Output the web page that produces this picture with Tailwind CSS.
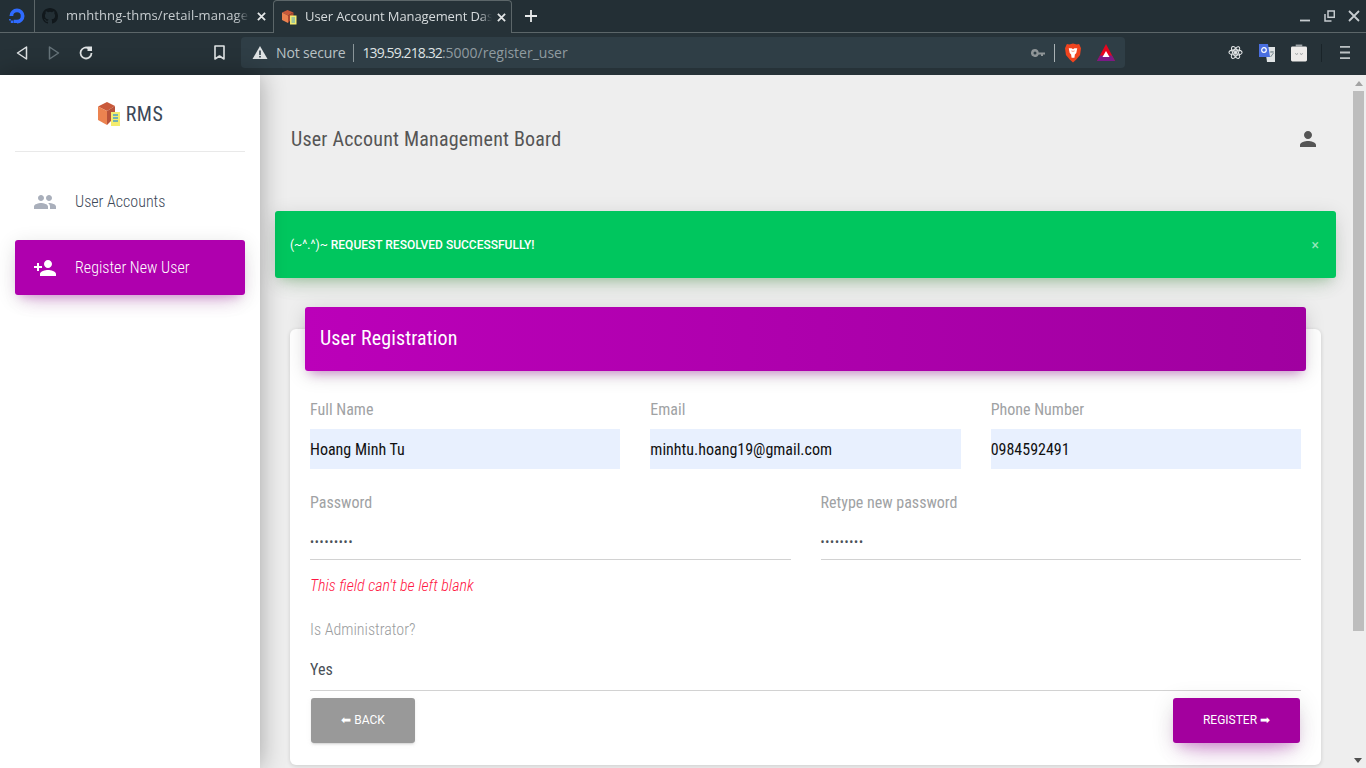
<!DOCTYPE html>
<html lang="en">
<head>
  <meta charset="UTF-8" />
  <title>User Account Management Dashboard</title>
  <script src="https://cdn.jsdelivr.net/npm/@tailwindcss/browser@4"></script>
</head>
<body class="h-[768px] w-[1366px] overflow-hidden bg-[#eeeeee] font-['Roboto',sans-serif]">

  <!-- Browser chrome -->
  <header class="h-[75px] bg-[#263238] font-['Open_Sans',sans-serif]">
    <!-- Tab strip -->
    <div class="flex h-[33px] items-end border-b border-[#5c6669] bg-[#232f35]">
      <div class="flex h-[32px] w-[35px] items-center justify-center border-r border-[#5c6669]">
        <svg class="h-[20px] w-[20px]" viewBox="0 0 24 24" fill="none">
          <path d="M12 21a9 9 0 1 0-9-9h4.500a4.500 4.500 0 1 1 4.500 4.500z" fill="#2f6bff"/>
          <path d="M12 16.500h-4v4h4zM7.500 20.500h-3v-3h3zM4.500 17.500h-2v-2h2z" fill="#2f6bff"/>
        </svg>
      </div>
      <div class="flex h-[32px] w-[238px] items-center pl-[7px]">
        <svg class="h-[16px] w-[16px] shrink-0" viewBox="0 0 16 16" fill="#11181c">
          <path d="M8 0C3.580 0 0 3.580 0 8c0 3.540 2.290 6.530 5.470 7.590.4.070.55-.17.55-.38 0-.19-.01-.82-.01-1.490-2.010.37-2.530-.49-2.690-.94-.09-.23-.48-.94-.82-1.130-.28-.15-.68-.52-.01-.53.630-.01 1.080.58 1.230.82.720 1.210 1.870.87 2.330.66.070-.52.280-.87.510-1.070-1.780-.2-3.640-.89-3.640-3.950 0-.87.310-1.590.820-2.150-.08-.2-.36-1.020.08-2.120 0 0 .670-.21 2.200.82a7.420 7.420 0 0 1 4 0c1.530-1.040 2.200-.82 2.200-.82.440 1.100.160 1.920.080 2.120.510.560.820 1.270.820 2.150 0 3.070-1.870 3.750-3.650 3.950.29.250.54.730.54 1.480 0 1.070-.01 1.930-.01 2.200 0 .210.150.460.550.380A8.010 8.010 0 0 0 16 8c0-4.420-3.580-8-8-8z"/>
        </svg>
        <span class="ml-[8px] w-[183px] shrink-0 whitespace-nowrap text-[13px] tracking-[0.1px] text-[#c6cccf] [mask-image:linear-gradient(to_right,black_170px,transparent_183px)]">mnhthng-thms/retail-manage</span>
        <svg class="ml-[8px] h-[9px] w-[9px] shrink-0" viewBox="0 0 10 10" stroke="#e3e6e7" stroke-width="2"><path d="M1 1l8 8M9 1l-8 8"/></svg>
      </div>
      <div class="relative -mb-px flex h-[33px] w-[239px] items-center rounded-t-[4px] border border-b-0 border-[#5c6669] bg-[#263238] pl-[7px]">
        <svg class="h-[16px] w-[16px] shrink-0" viewBox="0 0 16 16">
          <path d="M6.500 1L12.500 3.500L7 6.500L1 3.500z" fill="#c9593a"/>
          <path d="M1 3.500L7 6.500V14L1 11z" fill="#ec8350"/>
          <path d="M7 6.500L12.500 3.500V8L7 14z" fill="#b04a30"/>
          <rect x="9" y="6.500" width="6.500" height="9" fill="#f4ec6e"/>
          <path d="M10.500 9h3.500M10.500 11h3.500M10.500 13h3.500" stroke="#4ba0c8" stroke-width="1"/>
        </svg>
        <span class="ml-[8px] w-[187px] shrink-0 whitespace-nowrap text-[13px] tracking-[-0.1px] text-[#d5dadc] [mask-image:linear-gradient(to_right,black_175px,transparent_187px)]">User Account Management Das</span>
        <svg class="ml-[5px] h-[9px] w-[9px] shrink-0" viewBox="0 0 10 10" stroke="#e3e6e7" stroke-width="2"><path d="M1 1l8 8M9 1l-8 8"/></svg>
      </div>
      <div class="flex h-[32px] w-[38px] items-center justify-center">
        <svg class="h-[12px] w-[12px]" viewBox="0 0 12 12" stroke="#e8eaeb" stroke-width="1.800"><path d="M6 0v12M0 6h12"/></svg>
      </div>
      <div class="flex h-[32px] flex-1 items-center justify-end gap-[13px] pr-[6px]">
        <svg class="h-[12px] w-[11px]" viewBox="0 0 11 12" stroke="#c6cccf" stroke-width="1.800"><path d="M0 10.500h10"/></svg>
        <svg class="h-[12px] w-[11px]" viewBox="0 0 11 12" fill="none" stroke="#c6cccf" stroke-width="1.500"><rect x="4" y="1" width="6.300" height="6.300"/><path d="M1 4v7h6.500"/></svg>
        <svg class="h-[12px] w-[12px]" viewBox="0 0 12 12" stroke="#c6cccf" stroke-width="1.800"><path d="M1 1l10 10M11 1L1 11"/></svg>
      </div>
    </div>
    <!-- Toolbar -->
    <div class="flex h-[42px] items-center pb-[3px]">
      <div class="flex w-[241px] items-center pl-[16px]">
        <svg class="h-[16px] w-[12px]" viewBox="0 0 12 16" fill="none" stroke="#dfe3e4" stroke-width="1.500" stroke-linejoin="round"><path d="M10.500 2v12L1.500 8z"/></svg>
        <svg class="ml-[20px] h-[16px] w-[12px]" viewBox="0 0 12 16" fill="none" stroke="#66747a" stroke-width="1.500" stroke-linejoin="round"><path d="M1.500 2v12l9-6z"/></svg>
        <svg class="ml-[18px] h-[16px] w-[16px]" viewBox="0 0 16 16" fill="none" stroke="#dfe3e4" stroke-width="1.800"><path d="M13.500 8A5.500 5.500 0 1 1 11 3.400"/><path d="M9.500 1.500h4.500v4.500h-4.500z" fill="#dfe3e4" stroke="none"/></svg>
        <svg class="ml-[120px] h-[15px] w-[11px]" viewBox="0 0 11 15" fill="none" stroke="#dfe3e4" stroke-width="1.600" stroke-linejoin="round"><path d="M1 1h9v13l-4.500-3L1 14z"/></svg>
      </div>
      <div class="flex h-[31px] w-[884px] items-center rounded-[4px] bg-[#2f3e46] pl-[11px]">
        <svg class="h-[15px] w-[16px]" viewBox="0 0 16 15"><path d="M8 1l7.500 13H.500z" fill="#dfe3e4"/><path d="M7.200 5.500h1.600v4.500h-1.600zM7.200 11h1.600v1.500h-1.600z" fill="#2f3e46"/></svg>
        <span class="ml-[8px] text-[14px] tracking-[-0.15px] text-[#b9c1c4]">Not secure</span>
        <span class="ml-[7px] h-[18px] w-px bg-[#8a9599]"></span>
        <span class="ml-[9px] text-[14px] text-[#8f9ba0]"><span class="tracking-[-0.9px] text-[#dfe3e4]">139.59.218.32</span>:5000/register_user</span>
        <span class="flex-1"></span>
        <svg class="h-[8px] w-[14px]" viewBox="0 0 14 8" fill="#8f9597"><path d="M4 0a4 4 0 1 0 3.700 5.500H10V7h2V5.500h2v-2H7.700A4 4 0 0 0 4 0zm0 2.500a1.500 1.500 0 1 1 0 3 1.500 1.500 0 0 1 0-3z" fill-rule="evenodd"/></svg>
        <span class="ml-[9px] h-[18px] w-px bg-[#a9b1b4]"></span>
        <svg class="ml-[10px] h-[20px] w-[16px]" viewBox="0 0 17 20">
          <path d="M8.500 0l4 1 2.500-.500L17 5l-1 7-4 5-3.500 3L5 17l-4-5L0 5 2 .500 4.500 1z" fill="#f0441f"/>
          <path d="M4 5h3l1.500 1L10 5h3l-1 5-1.500 1.500L10 15H7l-.5-3.500L5 10z" fill="#fff"/>
          <path d="M6.500 7.500h1.500v1.500zM10.500 7.500H9v1.500z" fill="#f0441f"/>
        </svg>
        <svg class="ml-[16px] h-[17px] w-[18px]" viewBox="0 0 18 17">
          <path d="M9 0l9 17H0z" fill="#e8051e"/><path d="M0 17l3-5.500h12l3 5.500z" fill="#7b1a86"/><path d="M9 7l3.500 6h-7z" fill="#fff"/>
        </svg>
        <span class="w-[10px]"></span>
      </div>
      <div class="flex flex-1 items-center pl-[103px]">
        <svg class="h-[15px] w-[15px]" viewBox="0 0 16 16" fill="none" stroke="#e3e6e7" stroke-width="1.100"><ellipse cx="8" cy="8" rx="7" ry="2.800"/><ellipse cx="8" cy="8" rx="7" ry="2.800" transform="rotate(60 8 8)"/><ellipse cx="8" cy="8" rx="7" ry="2.800" transform="rotate(120 8 8)"/><circle cx="8" cy="8" r="1.300" fill="#e3e6e7"/></svg>
        <svg class="ml-[16px] h-[18px] w-[16px]" viewBox="0 0 16 18">
          <path d="M6 3h10v15H8z" fill="#dfe3e4"/><path d="M0 0h9l2 13H0z" fill="#4a6fe0"/>
          <circle cx="5" cy="6" r="2.300" fill="none" stroke="#fff" stroke-width="1.200"/>
          <path d="M11 8h4M13 7v1.500M11.500 13l3-4" stroke="#7c8a90" stroke-width="1"/>
        </svg>
        <svg class="ml-[16px] h-[18px] w-[16px]" viewBox="0 0 17 18">
          <path d="M5 0h7v2H5z" fill="#9ea5a8"/><rect x="0" y="2" width="17" height="16" rx="1.500" fill="#eeecea"/>
          <path d="M4.500 9.500l1.500 1 1.500-1M9.500 9.500l1.500 1 1.500-1" stroke="#7b8184" fill="none" stroke-width=".8"/>
        </svg>
        <span class="ml-[14px] h-[18px] w-px bg-[#1a2429]"></span>
        <svg class="ml-[18px] h-[13px] w-[10px]" viewBox="0 0 10 13" fill="#bcc2c4"><path d="M0 0h10v1.800H0zM0 5.600h10v1.800H0zM0 11.200h10V13H0z"/></svg>
      </div>
    </div>
  </header>

  <div class="flex h-[693px]">
    <!-- Sidebar -->
    <aside class="relative z-10 w-[260px] shrink-0 bg-white px-[15px] shadow-[0_0_24px_rgba(0,0,0,0.32)]">
      <div class="flex h-[77px] items-center justify-center border-b border-[#e9e9e9] pt-[1px]">
        <svg class="h-[24px] w-[24px]" viewBox="0 0 24 24">
          <path d="M10 0L18 4L10 9L1 4.500z" fill="#c9593a"/>
          <path d="M1 4.500L10 9V23L1 18z" fill="#ec8350"/>
          <path d="M10 9L18 4V15L10 23z" fill="#b8523a"/>
          <rect x="14" y="10" width="9" height="14" fill="#f4ec6e"/>
          <path d="M16 13h5M16 16h5M16 19h5" stroke="#4ba0c8" stroke-width="1.300"/>
        </svg>
        <span class="ml-[5px] text-[20px] tracking-[0.5px] text-[#3c4858] [font-stretch:87%]">RMS</span>
      </div>
      <nav class="mt-[22px]">
        <a class="flex h-[55px] items-center rounded-[3px] px-[18px] text-[#3c4858]">
          <svg class="h-[24px] w-[24px]" viewBox="0 0 24 24" fill="#a9afbb"><path d="M16 11c1.660 0 2.990-1.340 2.990-3S17.660 5 16 5s-3 1.340-3 3 1.340 3 3 3zm-8 0c1.660 0 2.990-1.340 2.990-3S9.660 5 8 5 5 6.340 5 8s1.340 3 3 3zm0 2c-2.330 0-7 1.170-7 3.500V19h14v-2.500c0-2.330-4.670-3.500-7-3.500zm8 0c-.29 0-.62.020-.97.050 1.160.84 1.970 1.970 1.970 3.450V19h6v-2.500c0-2.330-4.670-3.500-7-3.500z"/></svg>
          <span class="ml-[18px] text-[16px] font-light [font-stretch:87%]">User Accounts</span>
        </a>
        <a class="mt-[11px] flex h-[55px] items-center rounded-[3px] bg-[#af00ae] px-[18px] text-white shadow-[0_12px_20px_-10px_rgba(175,0,174,0.28),0_4px_20px_0_rgba(0,0,0,0.12),0_7px_8px_-5px_rgba(175,0,174,0.2)]">
          <svg class="h-[24px] w-[24px]" viewBox="0 0 24 24" fill="#fff"><path d="M15 12c2.210 0 4-1.790 4-4s-1.790-4-4-4-4 1.790-4 4 1.790 4 4 4zm-9-2V7H4v3H1v2h3v3h2v-3h3v-2H6zm9 4c-2.670 0-8 1.340-8 4v2h16v-2c0-2.660-5.330-4-8-4z"/></svg>
          <span class="ml-[18px] text-[16px] font-light [font-stretch:87%]">Register New User</span>
        </a>
      </nav>
    </aside>

    <!-- Main panel -->
    <main class="relative flex-1 overflow-hidden pl-[15px] pr-[30px] [font-stretch:87%]">
      <div class="flex h-[136px] items-start justify-between pl-[16px] pr-[16px] pt-[50px]">
        <h1 class="text-[20px] leading-[28px] font-normal tracking-[0.2px] text-[#555555]">User Account Management Board</h1>
        <svg class="mt-[2px] h-[24px] w-[24px]" viewBox="0 0 24 24" fill="#555"><path d="M12 12c2.210 0 4-1.790 4-4s-1.790-4-4-4-4 1.790-4 4 1.790 4 4 4zm0 2c-2.670 0-8 1.340-8 4v2h16v-2c0-2.660-5.330-4-8-4z"/></svg>
      </div>

      <!-- Alert -->
      <div class="flex h-[67px] items-center justify-between rounded-[3px] bg-[#00c65e] pl-[15px] pr-[17px] text-white shadow-[0_12px_20px_-10px_rgba(76,175,80,0.28),0_4px_20px_0_rgba(0,0,0,0.12),0_7px_8px_-5px_rgba(76,175,80,0.2)] [font-stretch:100%]">
        <span class="text-[12px] font-medium"><span class="font-normal">(~^.^)~ </span>REQUEST RESOLVED SUCCESSFULLY!</span>
        <span class="text-[14px] leading-none text-white/60">×</span>
      </div>

      <!-- Card -->
      <section class="relative ml-[15px] mr-[15px] mt-[51px] h-[436px] rounded-[6px] bg-white shadow-[0_1px_4px_0_rgba(0,0,0,0.14)]">
        <div class="relative -top-[22px] mx-[15px] flex h-[64px] items-center rounded-[3px] bg-gradient-to-r from-[#bb00b9] to-[#a000a0] px-[15px] pb-[2px] text-white shadow-[0_4px_20px_0_rgba(0,0,0,0.14),0_7px_10px_-5px_rgba(175,0,174,0.4)]">
          <h2 class="text-[20px] font-normal tracking-[0.12px]">User Registration</h2>
        </div>

        <form class="-mt-[22px] px-[20px] pt-[28px]">
          <div class="grid grid-cols-3 gap-[30px]">
            <div>
              <label class="block text-[16px] leading-[22px] text-[#a0a2a4]">Full Name</label>
              <div class="mt-[8px] flex h-[40px] items-center bg-[#e8f0fe] pt-[1px] text-[16px] text-[#111]">Hoang Minh Tu</div>
            </div>
            <div>
              <label class="block text-[16px] leading-[22px] text-[#a0a2a4]">Email</label>
              <div class="mt-[8px] flex h-[40px] items-center bg-[#e8f0fe] pt-[1px] text-[16px] text-[#111]">minhtu.hoang19@gmail.com</div>
            </div>
            <div>
              <label class="block text-[16px] leading-[22px] text-[#a0a2a4]">Phone Number</label>
              <div class="mt-[8px] flex h-[40px] items-center bg-[#e8f0fe] pt-[1px] text-[16px] text-[#111]">0984592491</div>
            </div>
          </div>

          <div class="mt-[23px] grid grid-cols-2 gap-[30px]">
            <div>
              <label class="block text-[16px] leading-[22px] text-[#a0a2a4]">Password</label>
              <div class="mt-[8px] flex h-[38px] items-center border-b border-[#d2d2d2] pt-[3px] text-[12px] tracking-[0.75px] text-[#495057]">•••••••••</div>
            </div>
            <div>
              <label class="block text-[16px] leading-[22px] text-[#a0a2a4]">Retype new password</label>
              <div class="mt-[8px] flex h-[38px] items-center border-b border-[#d2d2d2] pt-[3px] text-[12px] tracking-[0.75px] text-[#495057]">•••••••••</div>
            </div>
          </div>

          <p class="mt-[16px] text-[16px] leading-[20px] font-light italic text-[#ff1744]">This field can't be left blank</p>

          <label class="mt-[24px] block text-[16px] leading-[20px] font-light text-[#9a9c9e]">Is Administrator?</label>
          <div class="mt-[8px] flex h-[43px] items-center border-b border-[#d2d2d2] pt-[2px] text-[16px] text-[#495057]">Yes</div>

          <div class="mt-[7px] flex items-start justify-between pl-px pr-px [font-stretch:100%]">
            <button type="button" class="flex h-[45px] w-[104px] items-center justify-center rounded-[3px] bg-[#999999] pb-[2px] text-[12px] text-white shadow-[0_2px_2px_0_rgba(153,153,153,0.14),0_3px_1px_-2px_rgba(153,153,153,0.2),0_1px_5px_0_rgba(153,153,153,0.12)]">⬅ BACK</button>
            <button type="button" class="flex h-[45px] w-[127px] items-center justify-center rounded-[3px] bg-[#a3009e] pb-[2px] text-[12px] text-white shadow-[0_14px_26px_-12px_rgba(175,0,174,0.42),0_4px_23px_0_rgba(0,0,0,0.12),0_8px_10px_-5px_rgba(175,0,174,0.2)]">REGISTER ➡</button>
          </div>
        </form>
      </section>

      <!-- Scrollbar -->
      <div class="absolute right-0 top-0 h-full w-[15px] bg-[#eeeeee]">
        <div class="mx-auto mt-[6px] h-0 w-0 border-x-[4px] border-b-[5px] border-x-transparent border-b-[#a3a3a3]"></div>
        <div class="ml-[2px] mt-[5px] h-[540px] w-[11px] bg-[#bdbdbd]"></div>
        <div class="absolute bottom-[5px] left-[3px] h-0 w-0 border-x-[4px] border-t-[5px] border-x-transparent border-t-[#505050]"></div>
      </div>
    </main>
  </div>
</body>
</html>
